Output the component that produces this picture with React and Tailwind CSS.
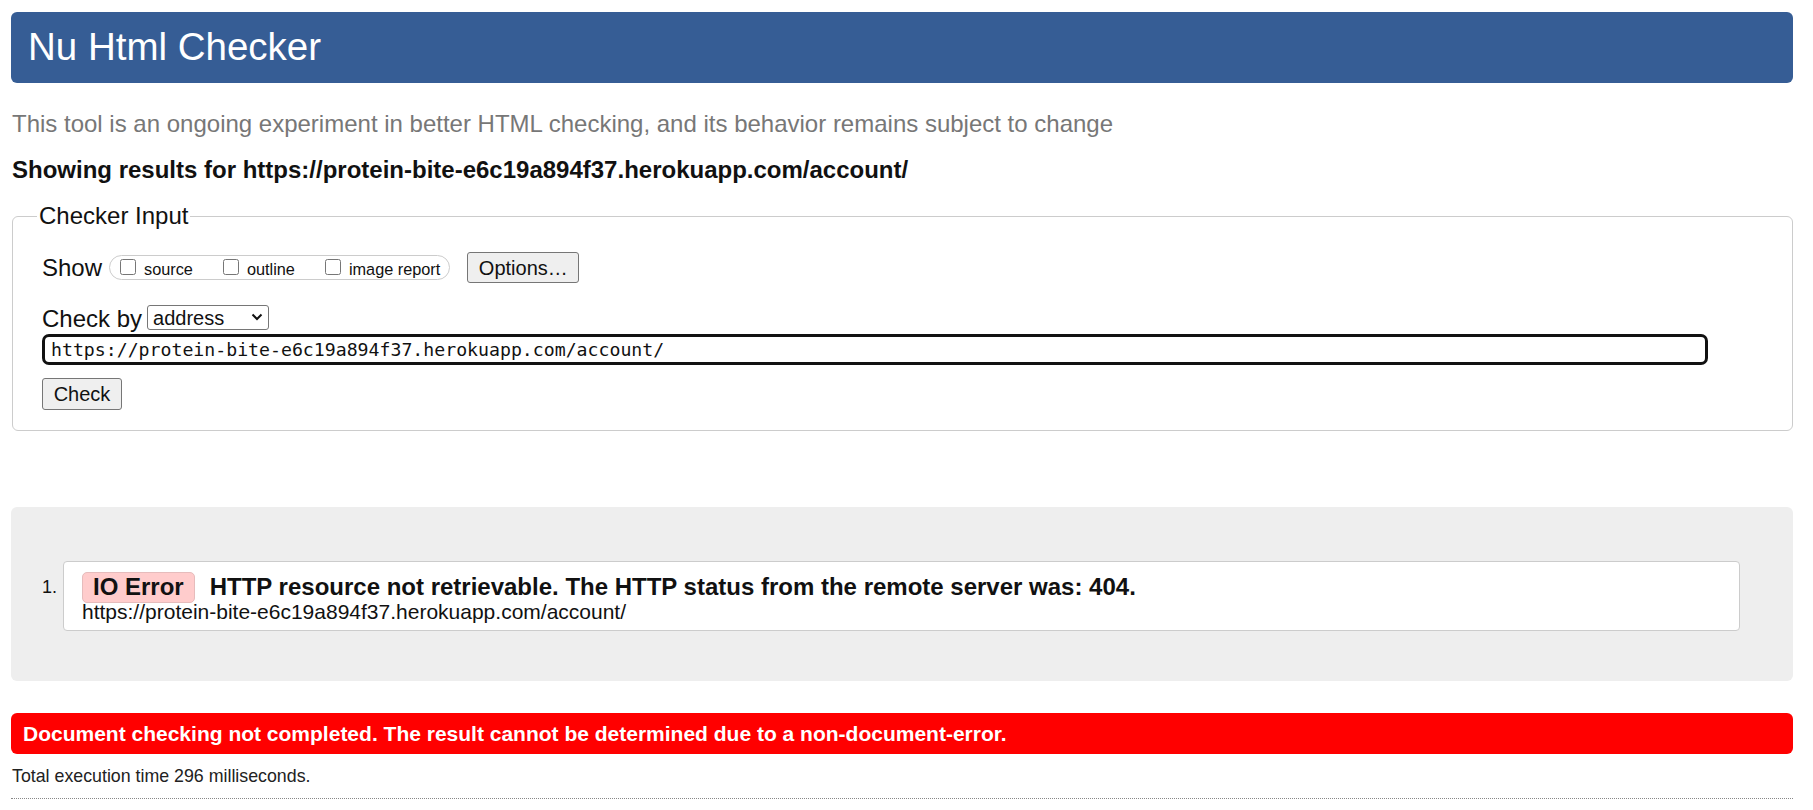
import React from 'react';

const url = 'https://protein-bite-e6c19a894f37.herokuapp.com/account/';

const Box = ({ label }) => (
  <label className="flex items-center">
    <input type="checkbox" className="w-4 h-4 mb-[2px]" />
    <span className="ml-[8px] mt-[3px] text-[16.3px]">{label}</span>
  </label>
);

const App = () => {
  return (
    <div className="min-h-screen bg-white pl-[11px] pr-[20px] pt-[12px] text-[#111] font-['Liberation_Sans',Arial,sans-serif]">
      {/* Titre */}
      <header className="h-[71px] rounded-[6px] bg-[#365d95] flex items-center pl-[17px]">
        <h1 className="text-[38.5px] leading-none text-white">Nu Html Checker</h1>
      </header>

      <p className="mt-[27px] ml-[1px] text-[24px] leading-[28px] text-[#777]">
        This tool is an ongoing experiment in better HTML checking, and its behavior remains subject to change
      </p>
      <p className="mt-[18px] ml-[1px] text-[24px] leading-[28px] font-bold">
        Showing results for {url}
      </p>

      {/* Checker Input */}
      <fieldset className="mt-[18px] ml-[1px] border border-[#ccc] rounded-[6px] pl-[24px] pb-[20px]">
        <legend className="px-[2px] text-[24px] leading-[28px]">Checker Input</legend>
        <div className="pl-[5px] pt-[22px]">
          <div className="flex items-center h-[31px]">
            <span className="text-[24px]">Show</span>
            <div className="ml-[7px] h-[25px] flex items-center gap-[30px] border border-[#ccc] rounded-full pl-[10px] pr-[9px]">
              <Box label="source" />
              <Box label="outline" />
              <Box label="image report" />
            </div>
            <button className="ml-[17px] w-[112px] h-[31px] bg-[#efefef] border border-[#767676] rounded-[3px] text-[20px]">
              Options…
            </button>
          </div>

          <div className="flex items-center mt-[23px] h-[25px]">
            <span className="text-[24px]">Check by</span>
            <div className="relative ml-[5px]">
              <select className="appearance-none w-[122px] h-[25px] border border-[#767676] rounded-[3px] pl-[5px] text-[20px] leading-none bg-white">
                <option>address</option>
                <option>file upload</option>
                <option>text input</option>
              </select>
              <svg className="absolute right-[6px] top-[8px] pointer-events-none" width="12" height="8" viewBox="0 0 12 8">
                <path d="M1.5 1.5 L6 6 L10.5 1.5" fill="none" stroke="#111" strokeWidth="2" />
              </svg>
            </div>
          </div>

          <input
            type="text"
            defaultValue={url}
            className="block mt-[3px] w-[1666px] h-[31px] border-[3px] border-[#111] rounded-[7px] pl-[6px] text-[18.2px] font-['DejaVu_Sans_Mono',monospace]"
          />

          <button className="mt-[13px] w-[80px] h-[32px] bg-[#efefef] border border-[#767676] rounded-[3px] text-[20px]">
            Check
          </button>
        </div>
      </fieldset>

      {/* Résultats */}
      <div className="mt-[76px] h-[174px] bg-[#eee] rounded-[6px] pt-[54px] pr-[53px] flex items-start">
        <span className="w-[52px] pr-[6px] mt-[16px] text-right text-[18px] leading-[20px]">1.</span>
        <div className="flex-1 h-[70px] bg-white border border-[#ccc] rounded-[4px] pl-[18px] pt-[7px]">
          <div className="flex items-center">
            <span className="h-[31px] px-[10px] flex items-center bg-[#ffcccc] border border-[#e6bcbc] rounded-[5px] text-[24px] font-bold">
              IO Error
            </span>
            <span className="ml-[15px] text-[24px] font-bold">
              HTTP resource not retrievable. The HTTP status from the remote server was: 404.
            </span>
          </div>
          <div className="-mt-[3px] text-[21px] leading-[20px]">{url}</div>
        </div>
      </div>

      <div className="mt-[32px] h-[41px] bg-[#ff0000] rounded-[6px] pl-[12px] flex items-center text-white font-bold text-[21px]">
        Document checking not completed. The result cannot be determined due to a non-document-error.
      </div>

      <p className="mt-[12px] ml-[1px] text-[17.8px] leading-[20px] text-[#222]">Total execution time 296 milliseconds.</p>
      <hr className="mt-[12px] border-0 border-t border-dotted border-[#888]" />
    </div>
  );
};

export default App;
